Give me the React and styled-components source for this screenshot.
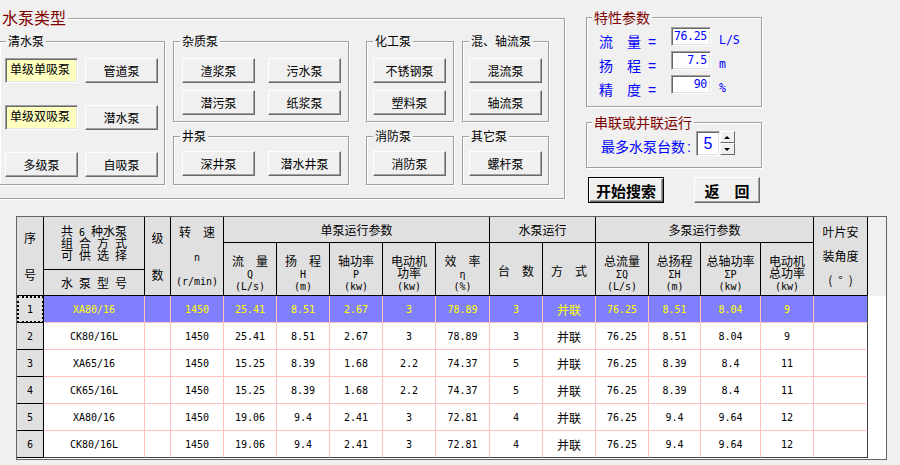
import React from "react";
import styled, { createGlobalStyle } from "styled-components";

const CJK = `"Noto Sans CJK SC", "Liberation Sans", sans-serif`;
const MONO = `"DejaVu Sans Mono", "Liberation Mono", "Noto Sans CJK SC", monospace`;

const GlobalStyle = createGlobalStyle`
  html, body {
    margin: 0;
    padding: 0;
    background: #f0f0f0;
  }
  body {
    font-family: ${CJK};
    font-size: 12px;
    color: #000;
  }
`;

const Window = styled.div`
  width: 900px;
  height: 465px;
  overflow: hidden;
  background: #f0f0f0;
`;

const TopRow = styled.div`
  display: flex;
  align-items: flex-start;
  height: 216px;
`;

// etched frame used by every group box
const Group = styled.div`
  position: relative;
  box-sizing: border-box;
  grid-area: ${(p) => p.$area || "auto"};
  height: ${(p) => (p.$h ? `${p.$h}px` : "auto")};
  margin-top: ${(p) => p.$mt || 0}px;
  padding: ${(p) => p.$pt || 0}px 0 0 ${(p) => p.$pl || 0}px;
  border: 1px solid #a0a0a0;
  box-shadow: inset 1px 1px 0 #fff, 1px 1px 0 #fff;
`;

const GroupTitle = styled.span`
  position: absolute;
  left: ${(p) => p.$left ?? 6}px;
  top: ${(p) => p.$top ?? -8}px;
  padding: 0 2px;
  background: #f0f0f0;
  color: ${(p) => p.$color || "#000"};
  font-size: ${(p) => p.$size || 12}px;
  line-height: ${(p) => (p.$size || 12) + 2}px;
  white-space: nowrap;
`;

const TypeFrame = styled(Group)`
  margin: 18px 0 0 -4px;
  width: 569px;
  height: 181px;
  padding: 22px 15px 0 2px;
  display: grid;
  grid-template-columns: 166px 8px 176px 17px 88px 8px 87px;
  grid-template-rows: 81px 49px;
  row-gap: 14px;
  grid-template-areas:
    "clear . misc . chem . mix"
    "clear . well . fire . other";
`;

const ButtonGrid = styled.div`
  display: grid;
  grid-template-columns: repeat(${(p) => p.$cols || 1}, 73px);
  grid-auto-rows: 25px;
  column-gap: ${(p) => p.$cgap || 0}px;
  row-gap: ${(p) => p.$rgap || 7}px;
`;

const PumpButton = styled.button`
  box-sizing: border-box;
  width: 73px;
  height: 25px;
  padding: 0;
  margin: 0;
  background: #f0f0f0;
  color: #000;
  font-family: ${CJK};
  font-size: 12px;
  border: 1px solid;
  border-color: #fff #696969 #696969 #fff;
  box-shadow: inset -1px -1px 0 #a0a0a0;
`;

const PumpTag = styled.div`
  box-sizing: border-box;
  width: 73px;
  height: 25px;
  padding: 2px 4px;
  background: #ffffc0;
  font-size: 12px;
  line-height: 15px;
  border: 1px solid;
  border-color: #a0a0a0 #fff #fff #a0a0a0;
  box-shadow: inset 1px 1px 0 #696969, inset -1px -1px 0 #e3e3e3;
`;

const RightPanel = styled.div`
  display: flex;
  flex-direction: column;
  width: 176px;
  margin: 17px 0 0 21px;
`;

const ParamList = styled.div`
  display: grid;
  grid-auto-rows: 19px;
  row-gap: 5px;
`;

const ParamRow = styled.div`
  display: flex;
  align-items: flex-start;
`;

const ParamLabel = styled.div`
  width: 72px;
  padding-top: 7px;
  color: #0000ff;
  font-size: 14px;
  line-height: 14px;
  white-space: nowrap;
`;

const Eq = styled.span`
  margin-left: 7px;
  font-family: "Liberation Sans", sans-serif;
`;

const sunken = `
  border: 1px solid;
  border-color: #a0a0a0 #fff #fff #a0a0a0;
  box-shadow: inset 1px 1px 0 #696969, inset -1px -1px 0 #e3e3e3;
`;

const ValueBox = styled.div`
  box-sizing: border-box;
  width: 40px;
  height: 19px;
  padding-right: 3px;
  background: #fff;
  ${sunken}
  color: #0000ff;
  font-family: ${MONO};
  font-size: 11.5px;
  line-height: 17px;
  text-align: right;
  white-space: nowrap;
  letter-spacing: -0.3px;
`;

const Unit = styled.div`
  margin-left: 8px;
  padding-top: 6px;
  color: #0000ff;
  font-family: ${MONO};
  font-size: 11.5px;
  line-height: 14px;
`;

const SerialRow = styled.div`
  display: flex;
  align-items: center;
`;

const SerialLabel = styled.div`
  padding-top: 5px;
  color: #0000ff;
  font-size: 14px;
  line-height: 14px;
  white-space: nowrap;
`;

const Colon = styled.span`
  margin-left: 2px;
  font-family: "Liberation Sans", sans-serif;
`;

const Spin = styled.div`
  display: flex;
  margin-left: 5px;
`;

const SpinValue = styled.div`
  box-sizing: border-box;
  width: 24px;
  height: 25px;
  background: #fff;
  ${sunken}
  color: #0000ff;
  font-family: "Liberation Sans", sans-serif;
  font-size: 16px;
  line-height: 23px;
  text-align: center;
`;

const SpinButtons = styled.div`
  display: flex;
  flex-direction: column;
  width: 15px;
`;

const SpinButton = styled.div`
  box-sizing: border-box;
  height: 12px;
  display: flex;
  align-items: center;
  justify-content: center;
  background: #f0f0f0;
  border: 1px solid;
  border-color: #fff #696969 #696969 #fff;
  &::after {
    content: "";
    border-left: 3px solid transparent;
    border-right: 3px solid transparent;
    ${(p) => (p.$down ? "border-top" : "border-bottom")}: 3px solid #000;
  }
`;

const ActionRow = styled.div`
  display: flex;
  gap: 30px;
  margin: 9px 0 0 2px;
`;

const ActionButton = styled.button`
  box-sizing: border-box;
  width: ${(p) => p.$w}px;
  height: 26px;
  padding: 0;
  margin: 0;
  background: #f0f0f0;
  color: #000;
  font-family: ${CJK};
  font-size: 15px;
  font-weight: bold;
  border: 1px solid ${(p) => (p.$primary ? "#000" : "#fff")};
  ${(p) =>
    p.$primary
      ? "box-shadow: inset 1px 1px 0 #fff, inset -1px -1px 0 #696969, inset -2px -2px 0 #a0a0a0;"
      : "border-color: #fff #696969 #696969 #fff; box-shadow: inset -1px -1px 0 #a0a0a0;"}
`;

/* ---------- result grid ---------- */

const COLS = [27, 101, 26, 53, 53, 53, 53, 53, 54, 53, 53, 53, 52, 60, 53, 54, 18];

const TableFrame = styled.div`
  box-sizing: border-box;
  width: 871px;
  height: 244px;
  margin-left: 16px;
  background: #fff;
  border: 1px solid #646464;
  display: grid;
  grid-template-columns: ${COLS.map((w) => `${w}px`).join(" ")};
  grid-template-rows: 26px 27px 26px repeat(6, 27px);
  align-content: start;
`;

const HeadCell = styled.div`
  grid-column: ${(p) => p.$col};
  grid-row: ${(p) => p.$row};
  box-sizing: border-box;
  background: #e0e0e0;
  border-right: 1px solid #000;
  border-bottom: 1px solid #000;
  display: flex;
  flex-direction: column;
  align-items: center;
  justify-content: center;
  gap: ${(p) => p.$gap || 0}px;
  padding-top: ${(p) => p.$pt || 0}px;
  font-size: 12px;
  line-height: 12px;
  white-space: nowrap;
`;

const HeadFiller = styled.div`
  grid-column: 17;
  grid-row: 1 / 4;
  background: #f0f0f0;
`;

const Line = styled.div`
  height: 12px;
  line-height: 12px;
`;

const Latin = styled.span`
  font-family: ${MONO};
  font-size: 10px;
  white-space: pre;
`;

const RowHead = styled.div`
  grid-column: 1;
  grid-row: ${(p) => p.$row};
  box-sizing: border-box;
  background: #e0e0e0;
  border-right: 1px solid #000;
  border-bottom: 1px solid #000;
  display: flex;
  align-items: center;
  justify-content: center;
  font-family: ${MONO};
  font-size: 10px;
  ${(p) => p.$focus && "outline: 2px dotted #000; outline-offset: -2px;"}
`;

const Cell = styled.div`
  grid-column: ${(p) => p.$col};
  grid-row: ${(p) => p.$row};
  box-sizing: border-box;
  border-right: 1px solid ${(p) => (p.$lastCol ? "#404040" : "#ffc0c0")};
  border-bottom: 1px solid ${(p) => (p.$lastRow ? "#404040" : "#ffc0c0")};
  background: ${(p) => (p.$sel ? "#8080ff" : "#fff")};
  color: ${(p) => (p.$sel ? "#ffff00" : "#000")};
  display: flex;
  align-items: center;
  justify-content: center;
  font-family: ${(p) => (p.$cjk ? CJK : MONO)};
  font-size: ${(p) => (p.$cjk ? 12 : 10)}px;
  white-space: nowrap;
`;

const params = [
  { label: "流　量", value: "76.25", unit: "L/S" },
  { label: "扬　程", value: "7.5", unit: "m" },
  { label: "精　度", value: "90", unit: "%" },
];

const rows = [
  ["XA80/16", "", "1450", "25.41", "8.51", "2.67", "3", "78.89", "3", "并联", "76.25", "8.51", "8.04", "9", ""],
  ["CK80/16L", "", "1450", "25.41", "8.51", "2.67", "3", "78.89", "3", "并联", "76.25", "8.51", "8.04", "9", ""],
  ["XA65/16", "", "1450", "15.25", "8.39", "1.68", "2.2", "74.37", "5", "并联", "76.25", "8.39", "8.4", "11", ""],
  ["CK65/16L", "", "1450", "15.25", "8.39", "1.68", "2.2", "74.37", "5", "并联", "76.25", "8.39", "8.4", "11", ""],
  ["XA80/16", "", "1450", "19.06", "9.4", "2.41", "3", "72.81", "4", "并联", "76.25", "9.4", "9.64", "12", ""],
  ["CK80/16L", "", "1450", "19.06", "9.4", "2.41", "3", "72.81", "4", "并联", "76.25", "9.4", "9.64", "12", ""],
];

// sub headers of the two parameter groups: [col, title, symbol, unit]
const subHeads = [
  [5, "流　量", "Q", "(L/s)"],
  [6, "扬　程", "H", "(m)"],
  [7, "轴功率", "P", "(kw)"],
  [8, "电动机", "功率", "(kw)"],
  [9, "效　率", "η", "(%)"],
  [12, "总流量", "ΣQ", "(L/s)"],
  [13, "总扬程", "ΣH", "(m)"],
  [14, "总轴功率", "ΣP", "(kw)"],
  [15, "电动机", "总功率", "(kw)"],
];

const isLatin = (s) => /^[\x00-\x7fΣη]+$/.test(s);

const ResultTable = () => (
  <TableFrame>
    <HeadCell $col="1" $row="1 / 4" $gap={25}>
      <Line>序</Line>
      <Line>号</Line>
    </HeadCell>
    <HeadCell $col="2" $row="1 / 3">
      <Line>共<Latin> 6 </Latin>种水泵</Line>
      <Line>组<Latin> </Latin>合<Latin> </Latin>方<Latin> </Latin>式</Line>
      <Line>可<Latin> </Latin>供<Latin> </Latin>选<Latin> </Latin>择</Line>
    </HeadCell>
    <HeadCell $col="2" $row="3">
      <Line>水<Latin> </Latin>泵<Latin> </Latin>型<Latin> </Latin>号</Line>
    </HeadCell>
    <HeadCell $col="3" $row="1 / 4" $gap={25}>
      <Line>级</Line>
      <Line>数</Line>
    </HeadCell>
    <HeadCell $col="4" $row="1 / 4" $gap={12}>
      <Line>转　速</Line>
      <Line><Latin>n</Latin></Line>
      <Line><Latin>(r/min)</Latin></Line>
    </HeadCell>
    <HeadCell $col="5 / 10" $row="1">单泵运行参数</HeadCell>
    <HeadCell $col="10 / 12" $row="1">水泵运行</HeadCell>
    <HeadCell $col="12 / 16" $row="1">多泵运行参数</HeadCell>
    {subHeads.map(([col, title, sym, unit]) => (
      <HeadCell key={col} $col={col} $row="2 / 4" $pt={7}>
        <Line>{title}</Line>
        <Line>{isLatin(sym) ? <Latin>{sym}</Latin> : sym}</Line>
        <Line><Latin>{unit}</Latin></Line>
      </HeadCell>
    ))}
    <HeadCell $col="10" $row="2 / 4" $pt={4}>台　数</HeadCell>
    <HeadCell $col="11" $row="2 / 4" $pt={4}>方　式</HeadCell>
    <HeadCell $col="16" $row="1 / 4" $gap={12}>
      <Line>叶片安</Line>
      <Line>装角度</Line>
      <Line>(<Latin> </Latin>°<Latin> </Latin>)</Line>
    </HeadCell>
    <HeadFiller />

    {rows.map((r, i) => {
      const row = i + 4;
      const sel = i === 0;
      const last = i === rows.length - 1;
      return (
        <React.Fragment key={i}>
          <RowHead $row={row} $focus={sel}>{i + 1}</RowHead>
          {r.map((v, j) => (
            <Cell
              key={j}
              $col={j + 2}
              $row={row}
              $sel={sel}
              $lastRow={last}
              $lastCol={j === r.length - 1}
              $cjk={j === 9}
            >
              {v}
            </Cell>
          ))}
        </React.Fragment>
      );
    })}
  </TableFrame>
);

const App = () => (
  <Window>
    <GlobalStyle />
    <TopRow>
      <TypeFrame>
        <GroupTitle $left={3} $top={-11} $size={16} $color="#800000">
          水泵类型
        </GroupTitle>

        <Group $area="clear" $pt={16} $pl={5}>
          <GroupTitle>清水泵</GroupTitle>
          <ButtonGrid $cols={2} $cgap={7} $rgap={22}>
            <PumpTag>单级单吸泵</PumpTag>
            <PumpButton>管道泵</PumpButton>
            <PumpTag>单级双吸泵</PumpTag>
            <PumpButton>潜水泵</PumpButton>
            <PumpButton>多级泵</PumpButton>
            <PumpButton>自吸泵</PumpButton>
          </ButtonGrid>
        </Group>

        <Group $area="misc" $pt={16} $pl={8}>
          <GroupTitle>杂质泵</GroupTitle>
          <ButtonGrid $cols={2} $cgap={13}>
            <PumpButton>渣浆泵</PumpButton>
            <PumpButton>污水泵</PumpButton>
            <PumpButton>潜污泵</PumpButton>
            <PumpButton>纸浆泵</PumpButton>
          </ButtonGrid>
        </Group>

        <Group $area="chem" $pt={16} $pl={6}>
          <GroupTitle>化工泵</GroupTitle>
          <ButtonGrid>
            <PumpButton>不锈钢泵</PumpButton>
            <PumpButton>塑料泵</PumpButton>
          </ButtonGrid>
        </Group>

        <Group $area="mix" $pt={16} $pl={6}>
          <GroupTitle>混、轴流泵</GroupTitle>
          <ButtonGrid>
            <PumpButton>混流泵</PumpButton>
            <PumpButton>轴流泵</PumpButton>
          </ButtonGrid>
        </Group>

        <Group $area="well" $pt={14} $pl={8}>
          <GroupTitle>井泵</GroupTitle>
          <ButtonGrid $cols={2} $cgap={13}>
            <PumpButton>深井泵</PumpButton>
            <PumpButton>潜水井泵</PumpButton>
          </ButtonGrid>
        </Group>

        <Group $area="fire" $pt={14} $pl={6}>
          <GroupTitle>消防泵</GroupTitle>
          <ButtonGrid>
            <PumpButton>消防泵</PumpButton>
          </ButtonGrid>
        </Group>

        <Group $area="other" $pt={14} $pl={6}>
          <GroupTitle>其它泵</GroupTitle>
          <ButtonGrid>
            <PumpButton>螺杆泵</PumpButton>
          </ButtonGrid>
        </Group>
      </TypeFrame>

      <RightPanel>
        <Group $h={90} $pt={9} $pl={12}>
          <GroupTitle $left={5} $top={-9} $size={14} $color="#800000">
            特性参数
          </GroupTitle>
          <ParamList>
            {params.map((p) => (
              <ParamRow key={p.label}>
                <ParamLabel>
                  {p.label}
                  <Eq>=</Eq>
                </ParamLabel>
                <ValueBox>{p.value}</ValueBox>
                <Unit>{p.unit}</Unit>
              </ParamRow>
            ))}
          </ParamList>
        </Group>

        <Group $h={46} $mt={15} $pt={8} $pl={14}>
          <GroupTitle $left={5} $top={-9} $size={14} $color="#800000">
            串联或并联运行
          </GroupTitle>
          <SerialRow>
            <SerialLabel>
              最多水泵台数<Colon>:</Colon>
            </SerialLabel>
            <Spin>
              <SpinValue>5</SpinValue>
              <SpinButtons>
                <SpinButton />
                <SpinButton $down />
              </SpinButtons>
            </Spin>
          </SerialRow>
        </Group>

        <ActionRow>
          <ActionButton $primary $w={76}>开始搜索</ActionButton>
          <ActionButton $w={66}>返　回</ActionButton>
        </ActionRow>
      </RightPanel>
    </TopRow>

    <ResultTable />
  </Window>
);

export default App;
